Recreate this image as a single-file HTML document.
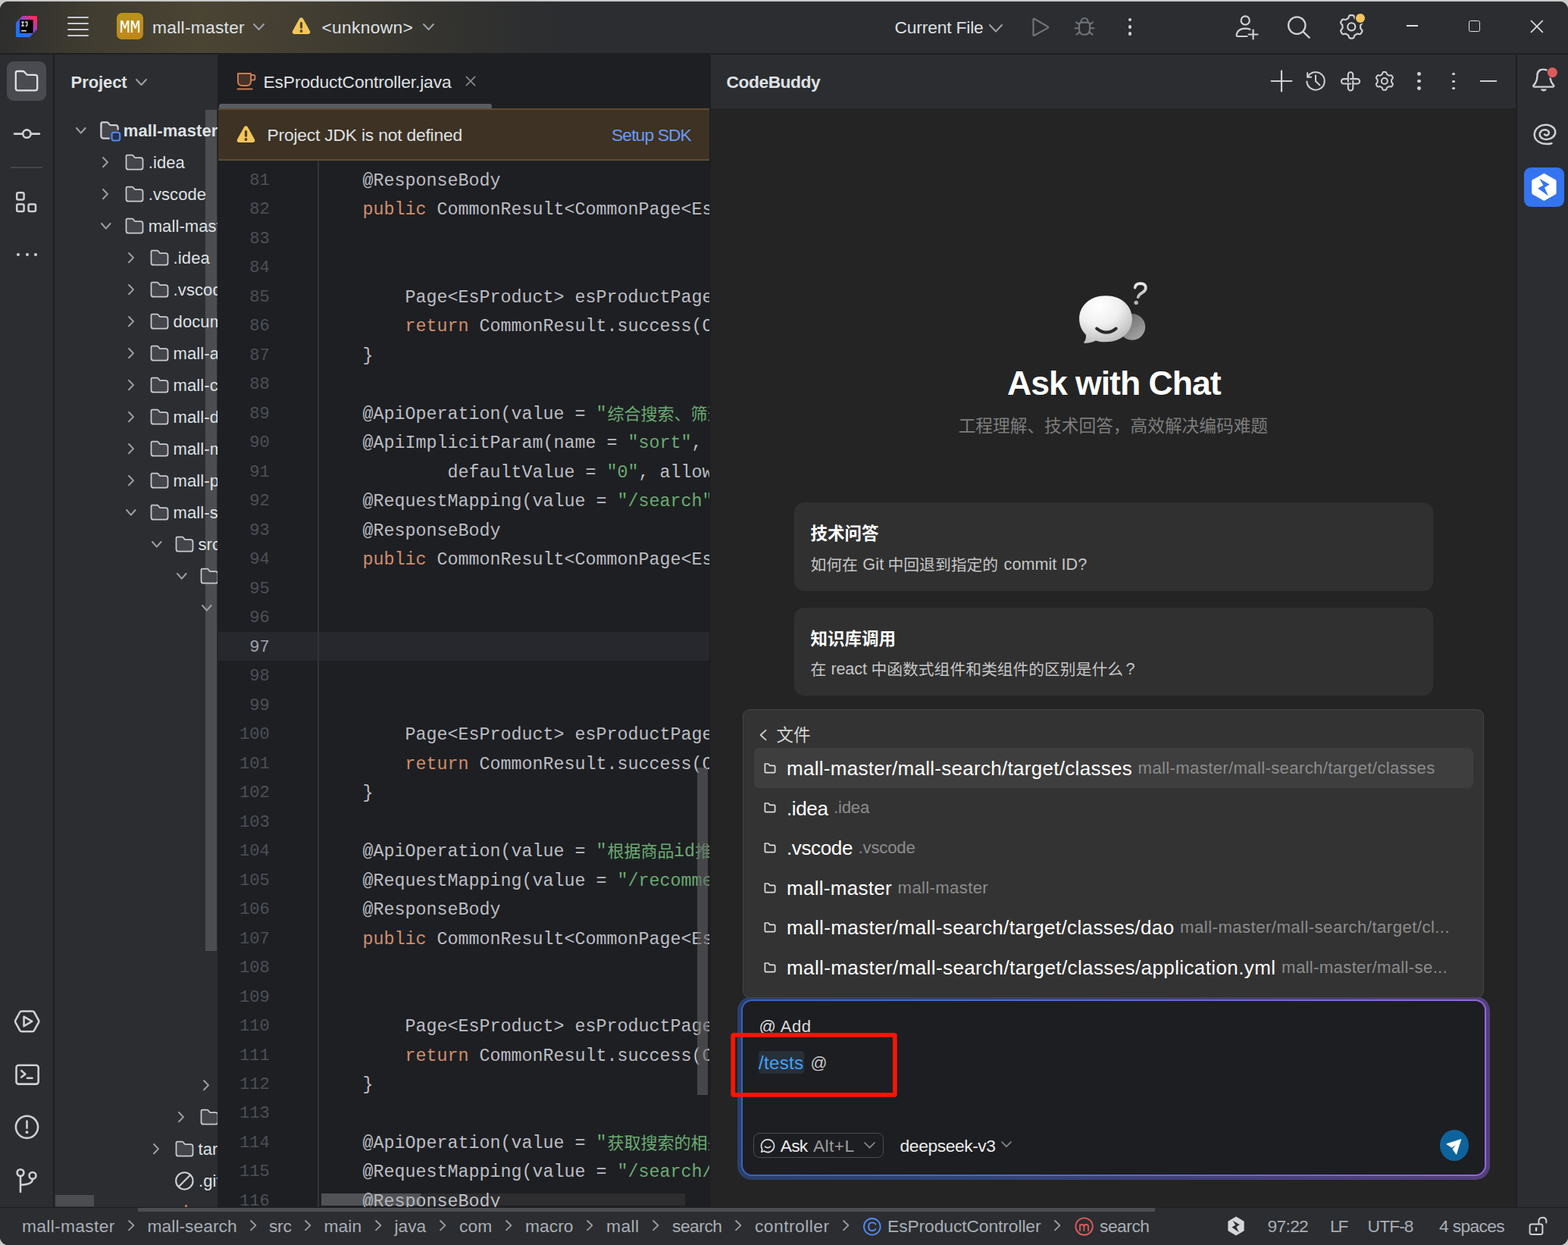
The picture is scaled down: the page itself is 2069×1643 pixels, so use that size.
<!DOCTYPE html>
<html lang="en"><head><meta charset="utf-8"><title>mall-master - EsProductController.java</title>
<style>
html,body{margin:0;padding:0;}
body{width:2069px;height:1643px;overflow:hidden;position:relative;background:#c9c9c9;font-family:"Liberation Sans",sans-serif;}
div,span,svg{position:absolute;}
span{white-space:pre;display:block;}
.clip{overflow:hidden;}
i{font-style:normal;}
</style></head><body>

<div id="root" style="left:0;top:0;width:2069px;height:1643px;background:#2b2d30;clip-path:inset(2px 0 0 0 round 11px);">
<div style="left:0px;top:72px;width:70.2px;height:1521px;background:#2b2d30;"></div>
<div style="left:70.2px;top:72px;width:1.8px;height:1521px;background:#1e1f22;"></div>
<div style="left:9px;top:81px;width:52px;height:52px;background:#4a4b50;border-radius:9px;"></div>
<svg style="left:18px;top:91px;" width="34" height="32" viewBox="0 0 34 32"><path d="M5 3 H12.2 Q13.2 3 14 3.8 L17.2 7.2 Q17.9 7.9 19 7.9 H28.4 Q31.2 7.9 31.2 10.7 V25.6 Q31.2 28.4 28.4 28.4 H5.6 Q2.8 28.4 2.8 25.6 V5.2 Q2.8 3 5 3Z" fill="none" stroke="#dfe1e5" stroke-width="2.3" stroke-linejoin="round"/></svg>
<svg style="left:16px;top:166px;" width="40" height="22" viewBox="0 0 40 22"><g fill="none" stroke="#ced0d6" stroke-width="2.6" stroke-linecap="round"><circle cx="19.4" cy="10.6" r="5.2"/><path d="M3 10.6H14M24.8 10.6H36"/></g></svg>
<div style="left:14px;top:220.3px;width:42px;height:1.5px;background:#43454a;"></div>
<svg style="left:19px;top:251px;" width="32" height="32" viewBox="0 0 32 32"><g fill="none" stroke="#ced0d6" stroke-width="2.5"><rect x="3.2" y="3.2" width="9.4" height="9.4" rx="2"/><rect x="3.2" y="18.6" width="9.4" height="9.4" rx="2"/><rect x="18.6" y="18.6" width="9.4" height="9.4" rx="2"/></g></svg>
<div style="left:22.2px;top:334.2px;width:4.2px;height:4.2px;background:#ced0d6;border-radius:50%;"></div>
<div style="left:33.5px;top:334.2px;width:4.2px;height:4.2px;background:#ced0d6;border-radius:50%;"></div>
<div style="left:44.8px;top:334.2px;width:4.2px;height:4.2px;background:#ced0d6;border-radius:50%;"></div>
<svg style="left:16.9px;top:1330.8px;" width="38.3" height="34.5" viewBox="0 0 40 36"><g fill="none" stroke="#ced0d6" stroke-width="2.7" stroke-linejoin="round"><path d="M12.2 3.6 H26.8 Q28.6 3.6 29.5 5.2 L35.4 16 Q36.2 17.6 35.4 19.2 L29.5 30 Q28.6 31.6 26.8 31.6 H12.2 Q10.4 31.6 9.5 30 L3.6 19.2 Q2.8 17.6 3.6 16 L9.5 5.2 Q10.4 3.6 12.2 3.6Z"/><path d="M15.2 11 V24.2 L26.4 17.6Z"/></g></svg>
<svg style="left:18.7px;top:1402.7px;" width="34.6" height="30.7" viewBox="0 0 36 32"><g fill="none" stroke="#ced0d6" stroke-width="2.7" stroke-linecap="round" stroke-linejoin="round"><rect x="2.6" y="2.8" width="30.4" height="26" rx="3.2"/><path d="M9.6 10.4 L15 15 L9.6 19.4M17.6 20.6 H24.6"/></g></svg>
<svg style="left:18px;top:1470px;" width="36" height="36" viewBox="0 0 36 36"><g fill="none" stroke="#ced0d6" stroke-width="2.6" stroke-linecap="round"><circle cx="17.5" cy="17.3" r="14.6"/><path d="M17.5 9.6 V18.6"/></g><circle cx="17.5" cy="24.2" r="1.9" fill="#ced0d6"/></svg>
<svg style="left:18px;top:1540px;" width="34" height="36" viewBox="0 0 34 36"><g fill="none" stroke="#ced0d6" stroke-width="2.6" stroke-linecap="round"><circle cx="9" cy="7.6" r="4.4"/><circle cx="25" cy="11.4" r="4.4"/><path d="M9 12 V33 M25 15.8 Q25 23.6 9 23.6"/></g></svg>
<div style="left:72px;top:72px;width:216px;height:1521px;background:#2b2d30;"></div>
<span style="left:93.6px;top:93.8px;font-size:22px;line-height:29px;color:#dfe1e5;font-weight:700;letter-spacing:-0.08px;">Project</span>
<svg style="left:178.3px;top:103.1px;" width="17" height="11" viewBox="0 0 17 11"><path d="M2 2 L8.5 9 L15 2" fill="none" stroke="#9da0a8" stroke-width="2" stroke-linecap="round" stroke-linejoin="round"/></svg>
<div style="left:271px;top:145px;width:14.5px;height:1110px;background:#4c4d51;"></div>
<div style="left:73px;top:1577px;width:51px;height:14.5px;background:#4c4d51;"></div>
<div class="clip" style="left:73px;top:144px;width:214.6px;height:1449px;">
<svg style="left:26.2px;top:23.00000000000001px;" width="15.6" height="10.6" viewBox="0 0 15.6 10.6"><path d="M2 2 L7.8 8.6 L13.6 2" fill="none" stroke="#9da0a8" stroke-width="2" stroke-linecap="round" stroke-linejoin="round"/></svg>
<svg style="left:58.5px;top:16.400000000000006px;" width="30" height="30" viewBox="0 0 30 30"><path d="M3 1.5 H9.2 Q10.1 1.5 10.7 2.2 L12.6 4.6 Q13.2 5.2 14.1 5.2 H20.5 Q23.5 5.2 23.5 8.2 V12 M12 22.5 H4.5 Q1.5 22.5 1.5 19.5 V3 Q1.5 1.5 3 1.5Z" fill="#43454a" stroke="#ced0d6" stroke-width="2" stroke-linejoin="round"/><path d="M3 1.5 H9.2 Q10.1 1.5 10.7 2.2 L12.6 4.6 Q13.2 5.2 14.1 5.2 H20.5 Q23.5 5.2 23.5 8.2 V22.5 H4.5 Q1.5 22.5 1.5 19.5Z" fill="#43454a" stroke="none"/><path d="M12.5 22.5 H4.5 Q1.5 22.5 1.5 19.5 V3 Q1.5 1.5 3 1.5 H9.2 Q10.1 1.5 10.7 2.2 L12.6 4.6 Q13.2 5.2 14.1 5.2 H20.5 Q23.5 5.2 23.5 8.2 V11.5" fill="none" stroke="#ced0d6" stroke-width="2" stroke-linejoin="round"/><rect x="15.6" y="14.8" width="10.6" height="10.6" rx="2.6" fill="#25324d" stroke="#548af7" stroke-width="2"/></svg>
<span style="left:89.80000000000001px;top:14.4px;font-size:22px;line-height:30px;color:#dfe1e5;font-weight:700;letter-spacing:0.1px;">mall-master</span>
<svg style="left:61.400000000000006px;top:62.20000000000002px;" width="10" height="16.2" viewBox="0 0 10 16.2"><path d="M2 2 L8 8.1 L2 14.2" fill="none" stroke="#9da0a8" stroke-width="2" stroke-linecap="round" stroke-linejoin="round"/></svg>
<svg style="left:91.6px;top:59px;" width="28" height="24" viewBox="0 0 28 24"><path d="M3 1.5 H9.2 Q10.1 1.5 10.7 2.2 L12.6 4.6 Q13.2 5.2 14.1 5.2 H20.5 Q23.5 5.2 23.5 8.2 V17.7 Q23.5 20.7 20.5 20.7 H4.5 Q1.5 20.7 1.5 17.7 V3 Q1.5 1.5 3 1.5Z" fill="#43454a" stroke="#c9cbd1" stroke-width="1.75" stroke-linejoin="round"/></svg>
<span style="left:122.70000000000002px;top:56.4px;font-size:22px;line-height:30px;color:#dfe1e5;letter-spacing:0.1px;">.idea</span>
<svg style="left:61.400000000000006px;top:104.20000000000002px;" width="10" height="16.2" viewBox="0 0 10 16.2"><path d="M2 2 L8 8.1 L2 14.2" fill="none" stroke="#9da0a8" stroke-width="2" stroke-linecap="round" stroke-linejoin="round"/></svg>
<svg style="left:91.6px;top:101px;" width="28" height="24" viewBox="0 0 28 24"><path d="M3 1.5 H9.2 Q10.1 1.5 10.7 2.2 L12.6 4.6 Q13.2 5.2 14.1 5.2 H20.5 Q23.5 5.2 23.5 8.2 V17.7 Q23.5 20.7 20.5 20.7 H4.5 Q1.5 20.7 1.5 17.7 V3 Q1.5 1.5 3 1.5Z" fill="#43454a" stroke="#c9cbd1" stroke-width="1.75" stroke-linejoin="round"/></svg>
<span style="left:122.70000000000002px;top:98.4px;font-size:22px;line-height:30px;color:#dfe1e5;letter-spacing:0.1px;">.vscode</span>
<svg style="left:59.3px;top:149.0px;" width="15.6" height="10.6" viewBox="0 0 15.6 10.6"><path d="M2 2 L7.8 8.6 L13.6 2" fill="none" stroke="#9da0a8" stroke-width="2" stroke-linecap="round" stroke-linejoin="round"/></svg>
<svg style="left:91.6px;top:143px;" width="28" height="24" viewBox="0 0 28 24"><path d="M3 1.5 H9.2 Q10.1 1.5 10.7 2.2 L12.6 4.6 Q13.2 5.2 14.1 5.2 H20.5 Q23.5 5.2 23.5 8.2 V17.7 Q23.5 20.7 20.5 20.7 H4.5 Q1.5 20.7 1.5 17.7 V3 Q1.5 1.5 3 1.5Z" fill="#43454a" stroke="#c9cbd1" stroke-width="1.75" stroke-linejoin="round"/></svg>
<span style="left:122.70000000000002px;top:140.4px;font-size:22px;line-height:30px;color:#dfe1e5;letter-spacing:0.1px;">mall-master</span>
<svg style="left:94.60000000000002px;top:188.20000000000002px;" width="10" height="16.2" viewBox="0 0 10 16.2"><path d="M2 2 L8 8.1 L2 14.2" fill="none" stroke="#9da0a8" stroke-width="2" stroke-linecap="round" stroke-linejoin="round"/></svg>
<svg style="left:124.69999999999999px;top:185px;" width="28" height="24" viewBox="0 0 28 24"><path d="M3 1.5 H9.2 Q10.1 1.5 10.7 2.2 L12.6 4.6 Q13.2 5.2 14.1 5.2 H20.5 Q23.5 5.2 23.5 8.2 V17.7 Q23.5 20.7 20.5 20.7 H4.5 Q1.5 20.7 1.5 17.7 V3 Q1.5 1.5 3 1.5Z" fill="#43454a" stroke="#c9cbd1" stroke-width="1.75" stroke-linejoin="round"/></svg>
<span style="left:155.60000000000002px;top:182.4px;font-size:22px;line-height:30px;color:#dfe1e5;letter-spacing:0.1px;">.idea</span>
<svg style="left:94.60000000000002px;top:230.20000000000002px;" width="10" height="16.2" viewBox="0 0 10 16.2"><path d="M2 2 L8 8.1 L2 14.2" fill="none" stroke="#9da0a8" stroke-width="2" stroke-linecap="round" stroke-linejoin="round"/></svg>
<svg style="left:124.69999999999999px;top:227px;" width="28" height="24" viewBox="0 0 28 24"><path d="M3 1.5 H9.2 Q10.1 1.5 10.7 2.2 L12.6 4.6 Q13.2 5.2 14.1 5.2 H20.5 Q23.5 5.2 23.5 8.2 V17.7 Q23.5 20.7 20.5 20.7 H4.5 Q1.5 20.7 1.5 17.7 V3 Q1.5 1.5 3 1.5Z" fill="#43454a" stroke="#c9cbd1" stroke-width="1.75" stroke-linejoin="round"/></svg>
<span style="left:155.60000000000002px;top:224.4px;font-size:22px;line-height:30px;color:#dfe1e5;letter-spacing:0.1px;">.vscode</span>
<svg style="left:94.60000000000002px;top:272.2px;" width="10" height="16.2" viewBox="0 0 10 16.2"><path d="M2 2 L8 8.1 L2 14.2" fill="none" stroke="#9da0a8" stroke-width="2" stroke-linecap="round" stroke-linejoin="round"/></svg>
<svg style="left:124.69999999999999px;top:269px;" width="28" height="24" viewBox="0 0 28 24"><path d="M3 1.5 H9.2 Q10.1 1.5 10.7 2.2 L12.6 4.6 Q13.2 5.2 14.1 5.2 H20.5 Q23.5 5.2 23.5 8.2 V17.7 Q23.5 20.7 20.5 20.7 H4.5 Q1.5 20.7 1.5 17.7 V3 Q1.5 1.5 3 1.5Z" fill="#43454a" stroke="#c9cbd1" stroke-width="1.75" stroke-linejoin="round"/></svg>
<span style="left:155.60000000000002px;top:266.4px;font-size:22px;line-height:30px;color:#dfe1e5;letter-spacing:0.1px;">document</span>
<svg style="left:94.60000000000002px;top:314.2px;" width="10" height="16.2" viewBox="0 0 10 16.2"><path d="M2 2 L8 8.1 L2 14.2" fill="none" stroke="#9da0a8" stroke-width="2" stroke-linecap="round" stroke-linejoin="round"/></svg>
<svg style="left:124.69999999999999px;top:311px;" width="28" height="24" viewBox="0 0 28 24"><path d="M3 1.5 H9.2 Q10.1 1.5 10.7 2.2 L12.6 4.6 Q13.2 5.2 14.1 5.2 H20.5 Q23.5 5.2 23.5 8.2 V17.7 Q23.5 20.7 20.5 20.7 H4.5 Q1.5 20.7 1.5 17.7 V3 Q1.5 1.5 3 1.5Z" fill="#43454a" stroke="#c9cbd1" stroke-width="1.75" stroke-linejoin="round"/></svg>
<span style="left:155.60000000000002px;top:308.4px;font-size:22px;line-height:30px;color:#dfe1e5;letter-spacing:0.1px;">mall-admin</span>
<svg style="left:94.60000000000002px;top:356.2px;" width="10" height="16.2" viewBox="0 0 10 16.2"><path d="M2 2 L8 8.1 L2 14.2" fill="none" stroke="#9da0a8" stroke-width="2" stroke-linecap="round" stroke-linejoin="round"/></svg>
<svg style="left:124.69999999999999px;top:353px;" width="28" height="24" viewBox="0 0 28 24"><path d="M3 1.5 H9.2 Q10.1 1.5 10.7 2.2 L12.6 4.6 Q13.2 5.2 14.1 5.2 H20.5 Q23.5 5.2 23.5 8.2 V17.7 Q23.5 20.7 20.5 20.7 H4.5 Q1.5 20.7 1.5 17.7 V3 Q1.5 1.5 3 1.5Z" fill="#43454a" stroke="#c9cbd1" stroke-width="1.75" stroke-linejoin="round"/></svg>
<span style="left:155.60000000000002px;top:350.4px;font-size:22px;line-height:30px;color:#dfe1e5;letter-spacing:0.1px;">mall-common</span>
<svg style="left:94.60000000000002px;top:398.19999999999993px;" width="10" height="16.2" viewBox="0 0 10 16.2"><path d="M2 2 L8 8.1 L2 14.2" fill="none" stroke="#9da0a8" stroke-width="2" stroke-linecap="round" stroke-linejoin="round"/></svg>
<svg style="left:124.69999999999999px;top:395px;" width="28" height="24" viewBox="0 0 28 24"><path d="M3 1.5 H9.2 Q10.1 1.5 10.7 2.2 L12.6 4.6 Q13.2 5.2 14.1 5.2 H20.5 Q23.5 5.2 23.5 8.2 V17.7 Q23.5 20.7 20.5 20.7 H4.5 Q1.5 20.7 1.5 17.7 V3 Q1.5 1.5 3 1.5Z" fill="#43454a" stroke="#c9cbd1" stroke-width="1.75" stroke-linejoin="round"/></svg>
<span style="left:155.60000000000002px;top:392.4px;font-size:22px;line-height:30px;color:#dfe1e5;letter-spacing:0.1px;">mall-demo</span>
<svg style="left:94.60000000000002px;top:440.19999999999993px;" width="10" height="16.2" viewBox="0 0 10 16.2"><path d="M2 2 L8 8.1 L2 14.2" fill="none" stroke="#9da0a8" stroke-width="2" stroke-linecap="round" stroke-linejoin="round"/></svg>
<svg style="left:124.69999999999999px;top:437px;" width="28" height="24" viewBox="0 0 28 24"><path d="M3 1.5 H9.2 Q10.1 1.5 10.7 2.2 L12.6 4.6 Q13.2 5.2 14.1 5.2 H20.5 Q23.5 5.2 23.5 8.2 V17.7 Q23.5 20.7 20.5 20.7 H4.5 Q1.5 20.7 1.5 17.7 V3 Q1.5 1.5 3 1.5Z" fill="#43454a" stroke="#c9cbd1" stroke-width="1.75" stroke-linejoin="round"/></svg>
<span style="left:155.60000000000002px;top:434.4px;font-size:22px;line-height:30px;color:#dfe1e5;letter-spacing:0.1px;">mall-mbg</span>
<svg style="left:94.60000000000002px;top:482.19999999999993px;" width="10" height="16.2" viewBox="0 0 10 16.2"><path d="M2 2 L8 8.1 L2 14.2" fill="none" stroke="#9da0a8" stroke-width="2" stroke-linecap="round" stroke-linejoin="round"/></svg>
<svg style="left:124.69999999999999px;top:479px;" width="28" height="24" viewBox="0 0 28 24"><path d="M3 1.5 H9.2 Q10.1 1.5 10.7 2.2 L12.6 4.6 Q13.2 5.2 14.1 5.2 H20.5 Q23.5 5.2 23.5 8.2 V17.7 Q23.5 20.7 20.5 20.7 H4.5 Q1.5 20.7 1.5 17.7 V3 Q1.5 1.5 3 1.5Z" fill="#43454a" stroke="#c9cbd1" stroke-width="1.75" stroke-linejoin="round"/></svg>
<span style="left:155.60000000000002px;top:476.4px;font-size:22px;line-height:30px;color:#dfe1e5;letter-spacing:0.1px;">mall-portal</span>
<svg style="left:92.39999999999999px;top:527.0px;" width="15.6" height="10.6" viewBox="0 0 15.6 10.6"><path d="M2 2 L7.8 8.6 L13.6 2" fill="none" stroke="#9da0a8" stroke-width="2" stroke-linecap="round" stroke-linejoin="round"/></svg>
<svg style="left:124.69999999999999px;top:521px;" width="28" height="24" viewBox="0 0 28 24"><path d="M3 1.5 H9.2 Q10.1 1.5 10.7 2.2 L12.6 4.6 Q13.2 5.2 14.1 5.2 H20.5 Q23.5 5.2 23.5 8.2 V17.7 Q23.5 20.7 20.5 20.7 H4.5 Q1.5 20.7 1.5 17.7 V3 Q1.5 1.5 3 1.5Z" fill="#43454a" stroke="#c9cbd1" stroke-width="1.75" stroke-linejoin="round"/></svg>
<span style="left:155.60000000000002px;top:518.4px;font-size:22px;line-height:30px;color:#dfe1e5;letter-spacing:0.1px;">mall-search</span>
<svg style="left:125.50000000000001px;top:569.0px;" width="15.6" height="10.6" viewBox="0 0 15.6 10.6"><path d="M2 2 L7.8 8.6 L13.6 2" fill="none" stroke="#9da0a8" stroke-width="2" stroke-linecap="round" stroke-linejoin="round"/></svg>
<svg style="left:157.8px;top:563px;" width="28" height="24" viewBox="0 0 28 24"><path d="M3 1.5 H9.2 Q10.1 1.5 10.7 2.2 L12.6 4.6 Q13.2 5.2 14.1 5.2 H20.5 Q23.5 5.2 23.5 8.2 V17.7 Q23.5 20.7 20.5 20.7 H4.5 Q1.5 20.7 1.5 17.7 V3 Q1.5 1.5 3 1.5Z" fill="#43454a" stroke="#c9cbd1" stroke-width="1.75" stroke-linejoin="round"/></svg>
<span style="left:188.5px;top:560.4px;font-size:22px;line-height:30px;color:#dfe1e5;letter-spacing:0.1px;">src</span>
<svg style="left:158.6px;top:611.0px;" width="15.6" height="10.6" viewBox="0 0 15.6 10.6"><path d="M2 2 L7.8 8.6 L13.6 2" fill="none" stroke="#9da0a8" stroke-width="2" stroke-linecap="round" stroke-linejoin="round"/></svg>
<svg style="left:190.89999999999998px;top:605px;" width="28" height="24" viewBox="0 0 28 24"><path d="M3 1.5 H9.2 Q10.1 1.5 10.7 2.2 L12.6 4.6 Q13.2 5.2 14.1 5.2 H20.5 Q23.5 5.2 23.5 8.2 V17.7 Q23.5 20.7 20.5 20.7 H4.5 Q1.5 20.7 1.5 17.7 V3 Q1.5 1.5 3 1.5Z" fill="#43454a" stroke="#c9cbd1" stroke-width="1.75" stroke-linejoin="round"/></svg>
<span style="left:221.39999999999998px;top:602.4px;font-size:22px;line-height:30px;color:#dfe1e5;letter-spacing:0.1px;">main</span>
<svg style="left:191.7px;top:653.0px;" width="15.6" height="10.6" viewBox="0 0 15.6 10.6"><path d="M2 2 L7.8 8.6 L13.6 2" fill="none" stroke="#9da0a8" stroke-width="2" stroke-linecap="round" stroke-linejoin="round"/></svg>
<svg style="left:194.2px;top:1280.2px;" width="10" height="16.2" viewBox="0 0 10 16.2"><path d="M2 2 L8 8.1 L2 14.2" fill="none" stroke="#9da0a8" stroke-width="2" stroke-linecap="round" stroke-linejoin="round"/></svg>
<svg style="left:161.0px;top:1322.2px;" width="10" height="16.2" viewBox="0 0 10 16.2"><path d="M2 2 L8 8.1 L2 14.2" fill="none" stroke="#9da0a8" stroke-width="2" stroke-linecap="round" stroke-linejoin="round"/></svg>
<svg style="left:190.89999999999998px;top:1319px;" width="28" height="24" viewBox="0 0 28 24"><path d="M3 1.5 H9.2 Q10.1 1.5 10.7 2.2 L12.6 4.6 Q13.2 5.2 14.1 5.2 H20.5 Q23.5 5.2 23.5 8.2 V17.7 Q23.5 20.7 20.5 20.7 H4.5 Q1.5 20.7 1.5 17.7 V3 Q1.5 1.5 3 1.5Z" fill="#43454a" stroke="#c9cbd1" stroke-width="1.75" stroke-linejoin="round"/></svg>
<span style="left:221.39999999999998px;top:1316.4px;font-size:22px;line-height:30px;color:#dfe1e5;letter-spacing:0.1px;">test</span>
<svg style="left:127.80000000000001px;top:1364.2px;" width="10" height="16.2" viewBox="0 0 10 16.2"><path d="M2 2 L8 8.1 L2 14.2" fill="none" stroke="#9da0a8" stroke-width="2" stroke-linecap="round" stroke-linejoin="round"/></svg>
<svg style="left:157.8px;top:1361px;" width="28" height="24" viewBox="0 0 28 24"><path d="M3 1.5 H9.2 Q10.1 1.5 10.7 2.2 L12.6 4.6 Q13.2 5.2 14.1 5.2 H20.5 Q23.5 5.2 23.5 8.2 V17.7 Q23.5 20.7 20.5 20.7 H4.5 Q1.5 20.7 1.5 17.7 V3 Q1.5 1.5 3 1.5Z" fill="#43454a" stroke="#c9cbd1" stroke-width="1.75" stroke-linejoin="round"/></svg>
<span style="left:188.5px;top:1358.4px;font-size:22px;line-height:30px;color:#dfe1e5;letter-spacing:0.1px;">target</span>
<svg style="left:156.5px;top:1400.5px;" width="27" height="27" viewBox="0 0 27 27"><g fill="none" stroke="#ced0d6" stroke-width="2.1"><circle cx="13.4" cy="13.4" r="11.2"/><path d="M5.6 21.2 L21.2 5.6"/></g></svg>
<span style="left:189px;top:1400.4px;font-size:22px;line-height:30px;color:#dfe1e5;letter-spacing:0.1px;">.gitignore</span>
<div style="left:170.5px;top:1445.5px;width:3px;height:3.5px;background:#c77d55;border-radius:1px;"></div>
</div>
<div style="left:286.6px;top:72px;width:1.8px;height:1521px;background:#1e1f22;"></div>
<div style="left:288.4px;top:72px;width:647.6px;height:1521px;background:#1e1f22;"></div>
<svg style="left:311px;top:94px;" width="28" height="26" viewBox="0 0 28 26"><g fill="#4a3226" stroke="#c77d55" stroke-width="2" stroke-linejoin="round" stroke-linecap="round"><path d="M3 3 H20 V13.6 Q20 19 14.6 19 H8.4 Q3 19 3 13.6Z"/><path d="M20 5 H23.4 Q25.4 5 25.4 7 V9.4 Q25.4 11.6 23.2 11.6 H20" fill="none"/><path d="M2.6 23.4 H21.6" fill="none"/></g></svg>
<span style="left:347.5px;top:92.9px;font-size:22.8px;line-height:30px;color:#dfe1e5;letter-spacing:-0.12px;">EsProductController.java</span>
<svg style="left:613px;top:99px;" width="16" height="16" viewBox="0 0 16 16"><path d="M2.4 2.4 L13.6 13.6 M13.6 2.4 L2.4 13.6" stroke="#868a91" stroke-width="1.7" stroke-linecap="round"/></svg>
<div style="left:289px;top:137px;width:360px;height:6.6px;background:#5a5d63;border-radius:3.3px;"></div>
<div style="left:288.4px;top:143px;width:647.6px;height:69px;background:#3d3223;"></div>
<div style="left:288.4px;top:142.9px;width:647.6px;height:2.1px;background:#5e4b30;"></div>
<div style="left:288.4px;top:209.8px;width:647.6px;height:2.2px;background:#5e4b30;"></div>
<svg style="left:310.5px;top:163.5px;" width="27" height="26" viewBox="0 0 27 26"><path d="M13.5 2.2 Q15 2.2 15.8 3.6 L25 20 Q26.2 23.6 22.6 24 H4.4 Q0.8 23.6 2 20 L11.2 3.6 Q12 2.2 13.5 2.2Z" fill="#f2c55c"/><rect x="11.9" y="7.8" width="3.2" height="9" rx="1.6" fill="#4d3f22"/><circle cx="13.5" cy="20" r="1.9" fill="#4d3f22"/></svg>
<span style="left:352.5px;top:163.0px;font-size:22.8px;line-height:30px;color:#dfe1e5;letter-spacing:-0.19px;">Project </span>
<span style="left:428.3px;top:163.0px;font-size:22.8px;line-height:30px;color:#dfe1e5;letter-spacing:-0.19px;">JDK </span>
<span style="left:477.0px;top:163.0px;font-size:22.8px;line-height:30px;color:#dfe1e5;letter-spacing:-0.19px;">is </span>
<span style="left:499.2px;top:163.0px;font-size:22.8px;line-height:30px;color:#dfe1e5;letter-spacing:-0.19px;">not </span>
<span style="left:536.5px;top:163.0px;font-size:22.8px;line-height:30px;color:#dfe1e5;letter-spacing:-0.19px;">defined</span>
<span style="left:807px;top:163.0px;font-size:22.8px;line-height:30px;color:#6b9bfa;letter-spacing:-0.87px;">Setup SDK</span>
<div class="clip" style="left:288.4px;top:212px;width:647.6px;height:1381px;">
<div style="left:0px;top:621.6px;width:647.6px;height:38.6px;background:#26282e;"></div>
<div style="left:131.0px;top:0px;width:1.6px;height:1381px;background:#313438;"></div>
<span style="right:580.2px;top:7.8px;font:22.1px/38.5px 'Liberation Mono',monospace;color:#4b5059;">81</span>
<span style="left:134.2px;top:7.8px;font:23.33px/38.5px 'Liberation Mono',monospace;color:#bcbec4;">    @ResponseBody</span>
<span style="right:580.2px;top:46.2px;font:22.1px/38.5px 'Liberation Mono',monospace;color:#4b5059;">82</span>
<span style="left:134.2px;top:46.2px;font:23.33px/38.5px 'Liberation Mono',monospace;color:#cf8e6d;">    public</span>
<span style="left:274.2px;top:46.2px;font:23.33px/38.5px 'Liberation Mono',monospace;color:#bcbec4;"> CommonResult&lt;CommonPage&lt;EsProduct&gt;&gt; search(</span>
<span style="right:580.2px;top:84.7px;font:22.1px/38.5px 'Liberation Mono',monospace;color:#4b5059;">83</span>
<span style="right:580.2px;top:123.2px;font:22.1px/38.5px 'Liberation Mono',monospace;color:#4b5059;">84</span>
<span style="right:580.2px;top:161.7px;font:22.1px/38.5px 'Liberation Mono',monospace;color:#4b5059;">85</span>
<span style="left:134.2px;top:161.7px;font:23.33px/38.5px 'Liberation Mono',monospace;color:#bcbec4;">        Page&lt;EsProduct&gt; esProductPage = esProductService.search(</span>
<span style="right:580.2px;top:200.2px;font:22.1px/38.5px 'Liberation Mono',monospace;color:#4b5059;">86</span>
<span style="left:134.2px;top:200.2px;font:23.33px/38.5px 'Liberation Mono',monospace;color:#cf8e6d;">        return</span>
<span style="left:330.2px;top:200.2px;font:23.33px/38.5px 'Liberation Mono',monospace;color:#bcbec4;"> CommonResult.success(CommonPage.restPage(</span>
<span style="right:580.2px;top:238.7px;font:22.1px/38.5px 'Liberation Mono',monospace;color:#4b5059;">87</span>
<span style="left:134.2px;top:238.7px;font:23.33px/38.5px 'Liberation Mono',monospace;color:#bcbec4;">    }</span>
<span style="right:580.2px;top:277.2px;font:22.1px/38.5px 'Liberation Mono',monospace;color:#4b5059;">88</span>
<span style="right:580.2px;top:315.7px;font:22.1px/38.5px 'Liberation Mono',monospace;color:#4b5059;">89</span>
<span style="left:134.2px;top:315.7px;font:23.33px/38.5px 'Liberation Mono',monospace;color:#bcbec4;">    @ApiOperation(value = </span>
<span style="left:498.2px;top:315.7px;font:23.33px/38.5px 'Liberation Mono',monospace;color:#6aab73;">&quot;</span>
<svg style="left:508.2px;top:317.8px" width="162.7" height="33.3" viewBox="0 0 162.7 33.3"><text x="4.5" y="23.6" font-size="22" fill="#6aab73" font-family="'Liberation Mono','Noto Sans CJK SC',monospace">综合搜索、筛选</text></svg>
<span style="right:580.2px;top:354.2px;font:22.1px/38.5px 'Liberation Mono',monospace;color:#4b5059;">90</span>
<span style="left:134.2px;top:354.2px;font:23.33px/38.5px 'Liberation Mono',monospace;color:#bcbec4;">    @ApiImplicitParam(name = </span>
<span style="left:540.2px;top:354.2px;font:23.33px/38.5px 'Liberation Mono',monospace;color:#6aab73;">&quot;sort&quot;</span>
<span style="left:624.2px;top:354.2px;font:23.33px/38.5px 'Liberation Mono',monospace;color:#bcbec4;">, value = </span>
<span style="right:580.2px;top:392.7px;font:22.1px/38.5px 'Liberation Mono',monospace;color:#4b5059;">91</span>
<span style="left:134.2px;top:392.7px;font:23.33px/38.5px 'Liberation Mono',monospace;color:#bcbec4;">            defaultValue = </span>
<span style="left:512.2px;top:392.7px;font:23.33px/38.5px 'Liberation Mono',monospace;color:#6aab73;">&quot;0&quot;</span>
<span style="left:554.2px;top:392.7px;font:23.33px/38.5px 'Liberation Mono',monospace;color:#bcbec4;">, allowableValues = </span>
<span style="right:580.2px;top:431.1px;font:22.1px/38.5px 'Liberation Mono',monospace;color:#4b5059;">92</span>
<span style="left:134.2px;top:431.1px;font:23.33px/38.5px 'Liberation Mono',monospace;color:#bcbec4;">    @RequestMapping(value = </span>
<span style="left:526.2px;top:431.1px;font:23.33px/38.5px 'Liberation Mono',monospace;color:#6aab73;">&quot;/search&quot;</span>
<span style="left:652.2px;top:431.1px;font:23.33px/38.5px 'Liberation Mono',monospace;color:#bcbec4;">, method</span>
<span style="right:580.2px;top:469.6px;font:22.1px/38.5px 'Liberation Mono',monospace;color:#4b5059;">93</span>
<span style="left:134.2px;top:469.6px;font:23.33px/38.5px 'Liberation Mono',monospace;color:#bcbec4;">    @ResponseBody</span>
<span style="right:580.2px;top:508.1px;font:22.1px/38.5px 'Liberation Mono',monospace;color:#4b5059;">94</span>
<span style="left:134.2px;top:508.1px;font:23.33px/38.5px 'Liberation Mono',monospace;color:#cf8e6d;">    public</span>
<span style="left:274.2px;top:508.1px;font:23.33px/38.5px 'Liberation Mono',monospace;color:#bcbec4;"> CommonResult&lt;CommonPage&lt;EsProduct&gt;&gt; search(</span>
<span style="right:580.2px;top:546.6px;font:22.1px/38.5px 'Liberation Mono',monospace;color:#4b5059;">95</span>
<span style="right:580.2px;top:585.1px;font:22.1px/38.5px 'Liberation Mono',monospace;color:#4b5059;">96</span>
<span style="right:580.2px;top:623.6px;font:22.1px/38.5px 'Liberation Mono',monospace;color:#a1a3ab;">97</span>
<span style="right:580.2px;top:662.1px;font:22.1px/38.5px 'Liberation Mono',monospace;color:#4b5059;">98</span>
<span style="right:580.2px;top:700.6px;font:22.1px/38.5px 'Liberation Mono',monospace;color:#4b5059;">99</span>
<span style="right:580.2px;top:739.1px;font:22.1px/38.5px 'Liberation Mono',monospace;color:#4b5059;">100</span>
<span style="left:134.2px;top:739.1px;font:23.33px/38.5px 'Liberation Mono',monospace;color:#bcbec4;">        Page&lt;EsProduct&gt; esProductPage = esProductService.search(</span>
<span style="right:580.2px;top:777.6px;font:22.1px/38.5px 'Liberation Mono',monospace;color:#4b5059;">101</span>
<span style="left:134.2px;top:777.6px;font:23.33px/38.5px 'Liberation Mono',monospace;color:#cf8e6d;">        return</span>
<span style="left:330.2px;top:777.6px;font:23.33px/38.5px 'Liberation Mono',monospace;color:#bcbec4;"> CommonResult.success(CommonPage.restPage(</span>
<span style="right:580.2px;top:816.0px;font:22.1px/38.5px 'Liberation Mono',monospace;color:#4b5059;">102</span>
<span style="left:134.2px;top:816.0px;font:23.33px/38.5px 'Liberation Mono',monospace;color:#bcbec4;">    }</span>
<span style="right:580.2px;top:854.5px;font:22.1px/38.5px 'Liberation Mono',monospace;color:#4b5059;">103</span>
<span style="right:580.2px;top:893.0px;font:22.1px/38.5px 'Liberation Mono',monospace;color:#4b5059;">104</span>
<span style="left:134.2px;top:893.0px;font:23.33px/38.5px 'Liberation Mono',monospace;color:#bcbec4;">    @ApiOperation(value = </span>
<span style="left:498.2px;top:893.0px;font:23.33px/38.5px 'Liberation Mono',monospace;color:#6aab73;">&quot;</span>
<svg style="left:508.2px;top:895.2px" width="96.4" height="33.3" viewBox="0 0 96.4 33.3"><text x="4.5" y="23.6" font-size="22" fill="#6aab73" font-family="'Liberation Mono','Noto Sans CJK SC',monospace">根据商品</text></svg>
<span style="left:600.6px;top:893.0px;font:23.33px/38.5px 'Liberation Mono',monospace;color:#6aab73;">id</span>
<svg style="left:624.6px;top:895.2px" width="52.2" height="33.3" viewBox="0 0 52.2 33.3"><text x="4.5" y="23.6" font-size="22" fill="#6aab73" font-family="'Liberation Mono','Noto Sans CJK SC',monospace">推荐</text></svg>
<span style="right:580.2px;top:931.5px;font:22.1px/38.5px 'Liberation Mono',monospace;color:#4b5059;">105</span>
<span style="left:134.2px;top:931.5px;font:23.33px/38.5px 'Liberation Mono',monospace;color:#bcbec4;">    @RequestMapping(value = </span>
<span style="left:526.2px;top:931.5px;font:23.33px/38.5px 'Liberation Mono',monospace;color:#6aab73;">&quot;/recommend/{id}&quot;</span>
<span style="left:764.2px;top:931.5px;font:23.33px/38.5px 'Liberation Mono',monospace;color:#bcbec4;">, </span>
<span style="right:580.2px;top:970.0px;font:22.1px/38.5px 'Liberation Mono',monospace;color:#4b5059;">106</span>
<span style="left:134.2px;top:970.0px;font:23.33px/38.5px 'Liberation Mono',monospace;color:#bcbec4;">    @ResponseBody</span>
<span style="right:580.2px;top:1008.5px;font:22.1px/38.5px 'Liberation Mono',monospace;color:#4b5059;">107</span>
<span style="left:134.2px;top:1008.5px;font:23.33px/38.5px 'Liberation Mono',monospace;color:#cf8e6d;">    public</span>
<span style="left:274.2px;top:1008.5px;font:23.33px/38.5px 'Liberation Mono',monospace;color:#bcbec4;"> CommonResult&lt;CommonPage&lt;EsProduct&gt;&gt; recommend(</span>
<span style="right:580.2px;top:1047.0px;font:22.1px/38.5px 'Liberation Mono',monospace;color:#4b5059;">108</span>
<span style="right:580.2px;top:1085.5px;font:22.1px/38.5px 'Liberation Mono',monospace;color:#4b5059;">109</span>
<span style="right:580.2px;top:1124.0px;font:22.1px/38.5px 'Liberation Mono',monospace;color:#4b5059;">110</span>
<span style="left:134.2px;top:1124.0px;font:23.33px/38.5px 'Liberation Mono',monospace;color:#bcbec4;">        Page&lt;EsProduct&gt; esProductPage = esProductService.recommend(</span>
<span style="right:580.2px;top:1162.5px;font:22.1px/38.5px 'Liberation Mono',monospace;color:#4b5059;">111</span>
<span style="left:134.2px;top:1162.5px;font:23.33px/38.5px 'Liberation Mono',monospace;color:#cf8e6d;">        return</span>
<span style="left:330.2px;top:1162.5px;font:23.33px/38.5px 'Liberation Mono',monospace;color:#bcbec4;"> CommonResult.success(CommonPage.restPage(</span>
<span style="right:580.2px;top:1200.9px;font:22.1px/38.5px 'Liberation Mono',monospace;color:#4b5059;">112</span>
<span style="left:134.2px;top:1200.9px;font:23.33px/38.5px 'Liberation Mono',monospace;color:#bcbec4;">    }</span>
<span style="right:580.2px;top:1239.4px;font:22.1px/38.5px 'Liberation Mono',monospace;color:#4b5059;">113</span>
<span style="right:580.2px;top:1277.9px;font:22.1px/38.5px 'Liberation Mono',monospace;color:#4b5059;">114</span>
<span style="left:134.2px;top:1277.9px;font:23.33px/38.5px 'Liberation Mono',monospace;color:#bcbec4;">    @ApiOperation(value = </span>
<span style="left:498.2px;top:1277.9px;font:23.33px/38.5px 'Liberation Mono',monospace;color:#6aab73;">&quot;</span>
<svg style="left:508.2px;top:1280.1px" width="162.7" height="33.3" viewBox="0 0 162.7 33.3"><text x="4.5" y="23.6" font-size="22" fill="#6aab73" font-family="'Liberation Mono','Noto Sans CJK SC',monospace">获取搜索的相关</text></svg>
<span style="right:580.2px;top:1316.4px;font:22.1px/38.5px 'Liberation Mono',monospace;color:#4b5059;">115</span>
<span style="left:134.2px;top:1316.4px;font:23.33px/38.5px 'Liberation Mono',monospace;color:#bcbec4;">    @RequestMapping(value = </span>
<span style="left:526.2px;top:1316.4px;font:23.33px/38.5px 'Liberation Mono',monospace;color:#6aab73;">&quot;/search/relate&quot;</span>
<span style="left:750.2px;top:1316.4px;font:23.33px/38.5px 'Liberation Mono',monospace;color:#bcbec4;">, method</span>
<span style="right:580.2px;top:1354.9px;font:22.1px/38.5px 'Liberation Mono',monospace;color:#4b5059;">116</span>
<span style="left:134.2px;top:1354.9px;font:23.33px/38.5px 'Liberation Mono',monospace;color:#bcbec4;">    @ResponseBody</span>
<div style="left:136.10000000000002px;top:1363.4px;width:480px;height:16px;background:rgba(255,255,255,0.065);"></div>
<div style="left:136.10000000000002px;top:1363.4px;width:131px;height:16px;background:rgba(160,162,168,0.32);"></div>
<div style="left:631.8000000000001px;top:801px;width:13.8px;height:432px;background:rgba(96,96,98,0.6);"></div>
</div>
<div style="left:936px;top:72px;width:2.2px;height:1521px;background:#1e1f22;"></div>
<div style="left:938.2px;top:72px;width:1062.2px;height:71.4px;background:#2b2d30;"></div>
<div style="left:938.2px;top:143.4px;width:1062.2px;height:1449.6px;background:#242424;"></div>
<span style="left:958.6px;top:92.7px;font-size:22.8px;line-height:30px;color:#dfe1e5;font-weight:700;letter-spacing:-0.49px;">CodeBuddy</span>
<svg style="left:1675px;top:91px;" width="32" height="32" viewBox="0 0 32 32"><path d="M16 2.6 V29.4 M2.6 16 H29.4" stroke="#ced0d6" stroke-width="2.2" stroke-linecap="round"/></svg>
<svg style="left:1720px;top:92px;" width="32" height="30" viewBox="0 0 32 30"><g fill="none" stroke="#ced0d6" stroke-width="2.05" stroke-linecap="round" stroke-linejoin="round"><path d="M5.6 9.7 A11.7 11.7 0 1 1 4.4 15.6"/><path d="M5.2 4.2 V9.7 H10.2"/><path d="M16 7.6 V15 L21.4 20.4"/></g></svg>
<svg style="left:1767px;top:92px;" width="30" height="30" viewBox="0 0 30 30"><g transform="translate(15.05 15.3)" fill="none" stroke="#ced0d6" stroke-width="2.05" stroke-linecap="round"><path d="M-3.2 0.3 V-8.9 A3.2 3.2 0 0 1 3.2 -8.9 V-4.1" transform="rotate(0)"/><path d="M-3.2 0.3 V-8.9 A3.2 3.2 0 0 1 3.2 -8.9 V-4.1" transform="rotate(90)"/><path d="M-3.2 0.3 V-8.9 A3.2 3.2 0 0 1 3.2 -8.9 V-4.1" transform="rotate(180)"/><path d="M-3.2 0.3 V-8.9 A3.2 3.2 0 0 1 3.2 -8.9 V-4.1" transform="rotate(270)"/></g></svg>
<svg style="left:1812.0px;top:92.2px" width="29.8" height="29.8" viewBox="1812.0 92.2 29.8 29.8"><path d="M1826.90 95.20 L1827.68 95.23 L1828.45 95.30 L1829.15 95.79 L1829.63 96.90 L1829.98 98.02 L1830.43 98.58 L1830.98 98.83 L1831.51 99.11 L1832.02 99.43 L1832.51 99.78 L1833.22 99.89 L1834.37 99.63 L1835.57 99.49 L1836.34 99.86 L1836.79 100.49 L1837.21 101.15 L1837.57 101.84 L1837.89 102.55 L1837.82 103.39 L1837.10 104.37 L1836.30 105.23 L1836.04 105.90 L1836.10 106.50 L1836.12 107.10 L1836.10 107.70 L1836.04 108.30 L1836.30 108.97 L1837.10 109.83 L1837.82 110.81 L1837.89 111.65 L1837.57 112.36 L1837.21 113.05 L1836.79 113.71 L1836.34 114.34 L1835.57 114.71 L1834.37 114.57 L1833.22 114.31 L1832.51 114.42 L1832.02 114.77 L1831.51 115.09 L1830.98 115.37 L1830.43 115.62 L1829.98 116.18 L1829.63 117.30 L1829.15 118.41 L1828.45 118.90 L1827.68 118.97 L1826.90 119.00 L1826.12 118.97 L1825.35 118.90 L1824.65 118.41 L1824.17 117.30 L1823.82 116.18 L1823.37 115.62 L1822.82 115.37 L1822.29 115.09 L1821.78 114.77 L1821.29 114.42 L1820.58 114.31 L1819.43 114.57 L1818.23 114.71 L1817.46 114.34 L1817.01 113.71 L1816.59 113.05 L1816.23 112.36 L1815.91 111.65 L1815.98 110.81 L1816.70 109.83 L1817.50 108.97 L1817.76 108.30 L1817.70 107.70 L1817.68 107.10 L1817.70 106.50 L1817.76 105.90 L1817.50 105.23 L1816.70 104.37 L1815.98 103.39 L1815.91 102.55 L1816.23 101.84 L1816.59 101.15 L1817.01 100.49 L1817.46 99.86 L1818.23 99.49 L1819.43 99.63 L1820.58 99.89 L1821.29 99.78 L1821.78 99.43 L1822.29 99.11 L1822.82 98.83 L1823.37 98.58 L1823.82 98.02 L1824.17 96.90 L1824.65 95.79 L1825.35 95.30 L1826.12 95.23Z" fill="none" stroke="#ced0d6" stroke-width="2.0" stroke-linejoin="round"/><circle cx="1826.9" cy="107.1" r="3.93" fill="none" stroke="#ced0d6" stroke-width="2.0"/></svg>
<div style="left:1870.3999999999999px;top:95.19999999999999px;width:4.8px;height:4.8px;background:#ced0d6;border-radius:50%;"></div>
<div style="left:1916.3px;top:96.1px;width:3.4px;height:3.4px;background:#ced0d6;border-radius:50%;"></div>
<div style="left:1870.3999999999999px;top:104.69999999999999px;width:4.8px;height:4.8px;background:#ced0d6;border-radius:50%;"></div>
<div style="left:1916.3px;top:105.6px;width:3.4px;height:3.4px;background:#ced0d6;border-radius:50%;"></div>
<div style="left:1870.3999999999999px;top:114.1px;width:4.8px;height:4.8px;background:#ced0d6;border-radius:50%;"></div>
<div style="left:1916.3px;top:115.0px;width:3.4px;height:3.4px;background:#ced0d6;border-radius:50%;"></div>
<div style="left:1952.6px;top:106.2px;width:22.8px;height:1.8px;background:#ced0d6;"></div>
<svg style="left:1415px;top:365px;" width="108" height="96" viewBox="1415 365 108 96"><defs><radialGradient id="bb" cx="0.36" cy="0.22" r="0.95"><stop offset="0" stop-color="#ffffff"/><stop offset="0.42" stop-color="#f0f0f0"/><stop offset="0.78" stop-color="#c4c4c4"/><stop offset="1" stop-color="#a4a4a4"/></radialGradient><linearGradient id="bg2" x1="0.1" y1="0.1" x2="0.8" y2="1"><stop offset="0" stop-color="#666666"/><stop offset="1" stop-color="#a8a8a8"/></linearGradient><linearGradient id="qg" x1="0" y1="0" x2="0" y2="1"><stop offset="0" stop-color="#ececec"/><stop offset="1" stop-color="#b8b8b8"/></linearGradient></defs>
<circle cx="1493.9" cy="431.4" r="17.3" fill="url(#bg2)"/>
<path d="M1459 390.2 C1479.5 390.2 1493.9 403.4 1493.9 420.8 C1493.9 438.2 1479.5 451.3 1459 451.3 C1454 451.3 1449.6 450.6 1445.8 449.4 C1441.6 451.6 1436.4 452.7 1431 452.9 C1430.2 452.9 1430 452.2 1430.5 451.6 C1432.6 448.6 1433.4 445.4 1432.8 441.6 C1427.2 436.2 1424.1 429.2 1424.1 420.8 C1424.1 403.4 1438.5 390.2 1459 390.2Z" fill="url(#bb)"/>
<path d="M1447.2 433.6 Q1459.9 443.6 1472.6 433.6" fill="none" stroke="#2a2a2a" stroke-width="4.1" stroke-linecap="round"/>
<path d="M1497.6 379.6 Q1498.4 374.2 1504.8 374.2 Q1511.6 374.4 1511.8 380 Q1511.8 383.6 1507.4 386.2 Q1502.6 389 1501.6 392.2" fill="none" stroke="url(#qg)" stroke-width="3.7" stroke-linecap="round" stroke-linejoin="round"/>
<circle cx="1499.2" cy="399.4" r="2.7" fill="#b4b4b4"/></svg>
<span style="left:1329.0px;top:476.5px;font-size:44.6px;line-height:58px;color:#ffffff;font-weight:700;letter-spacing:-1.03px;">Ask </span>
<span style="left:1419.1px;top:476.5px;font-size:44.6px;line-height:58px;color:#ffffff;font-weight:700;letter-spacing:-1.03px;">with </span>
<span style="left:1515.5px;top:476.5px;font-size:44.6px;line-height:58px;color:#ffffff;font-weight:700;letter-spacing:-1.03px;">Chat</span>
<svg style="left:1260.0px;top:545.7px" width="418.0" height="33.5" viewBox="0 0 418.0 33.5"><text x="4.7" y="24" font-size="22.7" fill="#7d7d7d" font-family="'Liberation Sans','Noto Sans CJK SC',sans-serif">工程理解、技术回答，高效解决编码难题</text></svg>
<div style="left:1048px;top:663.4px;width:843px;height:116.8px;background:#303030;border-radius:13px;"></div>
<svg style="left:1064.5px;top:688.4px" width="99.0" height="33.5" viewBox="0 0 99.0 33.5"><text x="4.5" y="24" font-size="22.5" font-weight="700" fill="#ffffff" font-family="'Liberation Sans','Noto Sans CJK SC',sans-serif">技术问答</text></svg>
<svg style="left:1064.5px;top:730.5px" width="71.0" height="31.5" viewBox="0 0 71.0 31.5"><text x="4.5" y="22.4" font-size="20.8" fill="#c6c6c6" font-family="'Liberation Sans','Noto Sans CJK SC',sans-serif">如何在</text></svg>
<span style="left:1138.2px;top:731.1px;font-size:21.6px;line-height:28px;color:#c6c6c6;letter-spacing:0.27px;">Git</span>
<svg style="left:1167.3px;top:730.5px" width="155.0" height="31.5" viewBox="0 0 155.0 31.5"><text x="4.5" y="22.4" font-size="20.8" fill="#c6c6c6" font-family="'Liberation Sans','Noto Sans CJK SC',sans-serif">中回退到指定的</text></svg>
<span style="left:1324.6px;top:731.1px;font-size:21.6px;line-height:28px;color:#c6c6c6;letter-spacing:0.04px;">commit ID?</span>
<div style="left:1048px;top:801.6px;width:843px;height:116.8px;background:#303030;border-radius:13px;"></div>
<svg style="left:1064.5px;top:826.6px" width="121.8" height="33.5" viewBox="0 0 121.8 33.5"><text x="4.5" y="24" font-size="22.5" font-weight="700" fill="#ffffff" font-family="'Liberation Sans','Noto Sans CJK SC',sans-serif">知识库调用</text></svg>
<svg style="left:1064.5px;top:868.7px" width="29.0" height="31.5" viewBox="0 0 29.0 31.5"><text x="4.5" y="22.4" font-size="20.8" fill="#c6c6c6" font-family="'Liberation Sans','Noto Sans CJK SC',sans-serif">在</text></svg>
<span style="left:1096.4px;top:869.3px;font-size:21.6px;line-height:28px;color:#c6c6c6;letter-spacing:-0.12px;">react</span>
<svg style="left:1144.6px;top:868.7px" width="341.8" height="31.5" viewBox="0 0 341.8 31.5"><text x="4.5" y="22.4" font-size="20.8" fill="#c6c6c6" font-family="'Liberation Sans','Noto Sans CJK SC',sans-serif">中函数式组件和类组件的区别是什么</text></svg>
<span style="left:1485.6px;top:869.3px;font-size:21.6px;line-height:28px;color:#c6c6c6;">?</span>
<div style="left:973.1px;top:1315.1px;width:992.9px;height:241.8px;background:linear-gradient(90deg,#2a3f6c 0%,#2f4478 30%,#45407c 65%,#553f7e 100%);border-radius:19px;"></div>
<div style="left:977.9px;top:1319.2px;width:983.5px;height:232.9px;background:linear-gradient(90deg,#3763bd 0%,#3f6ccc 28%,#6a66d4 62%,#9069dc 100%);border-radius:14.6px;"></div>
<div style="left:980.3px;top:1321.3px;width:978.6px;height:228.4px;background:#1d1e22;border-radius:12.2px;"></div>
<div style="left:980px;top:936px;width:978px;height:381px;background:#333333;border-radius:9px;border:1.2px solid #454545;box-sizing:border-box;"></div>
<svg style="left:1000px;top:960px;" width="14" height="20" viewBox="0 0 14 20"><path d="M10.6 3.6 L3.6 10 L10.6 16.4" fill="none" stroke="#d0d0d0" stroke-width="1.8" stroke-linecap="round" stroke-linejoin="round"/></svg>
<svg style="left:1020.2px;top:954.4px" width="54.0" height="33.8" viewBox="0 0 54.0 33.8"><text x="4.5" y="24" font-size="22.5" fill="#d4d4d4" font-family="'Liberation Sans','Noto Sans CJK SC',sans-serif">文件</text></svg>
<div style="left:994.8px;top:987.2px;width:949.4px;height:52.4px;background:#3e3e3e;border-radius:7px;"></div>
<svg style="left:1007px;top:1004.6px;" width="18" height="18" viewBox="0 0 18 18"><path d="M2.4 3 H6.8 L8.8 5.4 H14.4 Q15.6 5.4 15.6 6.6 V13.4 Q15.6 14.6 14.4 14.6 H3.6 Q2.4 14.6 2.4 13.4Z" fill="none" stroke="#e0e0e0" stroke-width="1.7" stroke-linejoin="round"/></svg>
<span style="left:1038.0px;top:996.8px;font-size:26px;line-height:34px;color:#ffffff;letter-spacing:0.29px;">mall-</span>
<span style="left:1095.8px;top:996.8px;font-size:26px;line-height:34px;color:#ffffff;letter-spacing:0.29px;">master/</span>
<span style="left:1184.5px;top:996.8px;font-size:26px;line-height:34px;color:#ffffff;letter-spacing:0.29px;">mall-</span>
<span style="left:1242.3px;top:996.8px;font-size:26px;line-height:34px;color:#ffffff;letter-spacing:0.29px;">search/</span>
<span style="left:1329.5px;top:996.8px;font-size:26px;line-height:34px;color:#ffffff;letter-spacing:0.29px;">target/</span>
<span style="left:1405.3px;top:996.8px;font-size:26px;line-height:34px;color:#ffffff;letter-spacing:0.29px;">classes</span>
<span style="left:1501.6px;top:998.6px;font-size:22.2px;line-height:29px;color:#8c8c8c;letter-spacing:0.32px;">mall-</span>
<span style="left:1551.3px;top:998.6px;font-size:22.2px;line-height:29px;color:#8c8c8c;letter-spacing:0.32px;">master/</span>
<span style="left:1627.5px;top:998.6px;font-size:22.2px;line-height:29px;color:#8c8c8c;letter-spacing:0.32px;">mall-</span>
<span style="left:1677.2px;top:998.6px;font-size:22.2px;line-height:29px;color:#8c8c8c;letter-spacing:0.32px;">search/</span>
<span style="left:1752.2px;top:998.6px;font-size:22.2px;line-height:29px;color:#8c8c8c;letter-spacing:0.32px;">target/</span>
<span style="left:1817.4px;top:998.6px;font-size:22.2px;line-height:29px;color:#8c8c8c;letter-spacing:0.32px;">classes</span>
<svg style="left:1007px;top:1057.26px;" width="18" height="18" viewBox="0 0 18 18"><path d="M2.4 3 H6.8 L8.8 5.4 H14.4 Q15.6 5.4 15.6 6.6 V13.4 Q15.6 14.6 14.4 14.6 H3.6 Q2.4 14.6 2.4 13.4Z" fill="none" stroke="#e0e0e0" stroke-width="1.7" stroke-linejoin="round"/></svg>
<span style="left:1038px;top:1049.5px;font-size:26px;line-height:34px;color:#ffffff;letter-spacing:-0.38px;">.idea</span>
<span style="left:1100.1px;top:1051.3px;font-size:22.2px;line-height:29px;color:#8c8c8c;letter-spacing:-0.23px;">.idea</span>
<svg style="left:1007px;top:1109.92px;" width="18" height="18" viewBox="0 0 18 18"><path d="M2.4 3 H6.8 L8.8 5.4 H14.4 Q15.6 5.4 15.6 6.6 V13.4 Q15.6 14.6 14.4 14.6 H3.6 Q2.4 14.6 2.4 13.4Z" fill="none" stroke="#e0e0e0" stroke-width="1.7" stroke-linejoin="round"/></svg>
<span style="left:1038px;top:1102.1px;font-size:26px;line-height:34px;color:#ffffff;letter-spacing:-0.37px;">.vscode</span>
<span style="left:1132.6px;top:1103.9px;font-size:22.2px;line-height:29px;color:#8c8c8c;letter-spacing:-0.22px;">.vscode</span>
<svg style="left:1007px;top:1162.58px;" width="18" height="18" viewBox="0 0 18 18"><path d="M2.4 3 H6.8 L8.8 5.4 H14.4 Q15.6 5.4 15.6 6.6 V13.4 Q15.6 14.6 14.4 14.6 H3.6 Q2.4 14.6 2.4 13.4Z" fill="none" stroke="#e0e0e0" stroke-width="1.7" stroke-linejoin="round"/></svg>
<span style="left:1038.0px;top:1154.8px;font-size:26px;line-height:34px;color:#ffffff;letter-spacing:0.29px;">mall-</span>
<span style="left:1095.8px;top:1154.8px;font-size:26px;line-height:34px;color:#ffffff;letter-spacing:0.29px;">master</span>
<span style="left:1184.6px;top:1156.6px;font-size:22.2px;line-height:29px;color:#8c8c8c;letter-spacing:0.32px;">mall-</span>
<span style="left:1234.3px;top:1156.6px;font-size:22.2px;line-height:29px;color:#8c8c8c;letter-spacing:0.32px;">master</span>
<svg style="left:1007px;top:1215.24px;" width="18" height="18" viewBox="0 0 18 18"><path d="M2.4 3 H6.8 L8.8 5.4 H14.4 Q15.6 5.4 15.6 6.6 V13.4 Q15.6 14.6 14.4 14.6 H3.6 Q2.4 14.6 2.4 13.4Z" fill="none" stroke="#e0e0e0" stroke-width="1.7" stroke-linejoin="round"/></svg>
<span style="left:1038.0px;top:1207.4px;font-size:26px;line-height:34px;color:#ffffff;letter-spacing:0.38px;">mall-</span>
<span style="left:1096.2px;top:1207.4px;font-size:26px;line-height:34px;color:#ffffff;letter-spacing:0.38px;">master/</span>
<span style="left:1185.6px;top:1207.4px;font-size:26px;line-height:34px;color:#ffffff;letter-spacing:0.38px;">mall-</span>
<span style="left:1243.8px;top:1207.4px;font-size:26px;line-height:34px;color:#ffffff;letter-spacing:0.38px;">search/</span>
<span style="left:1331.7px;top:1207.4px;font-size:26px;line-height:34px;color:#ffffff;letter-spacing:0.38px;">target/</span>
<span style="left:1408.0px;top:1207.4px;font-size:26px;line-height:34px;color:#ffffff;letter-spacing:0.38px;">classes/</span>
<span style="left:1505.0px;top:1207.4px;font-size:26px;line-height:34px;color:#ffffff;letter-spacing:0.38px;">dao</span>
<span style="left:1557.1px;top:1209.2px;font-size:22.2px;line-height:29px;color:#8c8c8c;letter-spacing:0.43px;">mall-</span>
<span style="left:1607.4px;top:1209.2px;font-size:22.2px;line-height:29px;color:#8c8c8c;letter-spacing:0.43px;">master/</span>
<span style="left:1684.4px;top:1209.2px;font-size:22.2px;line-height:29px;color:#8c8c8c;letter-spacing:0.43px;">mall-</span>
<span style="left:1734.6px;top:1209.2px;font-size:22.2px;line-height:29px;color:#8c8c8c;letter-spacing:0.43px;">search/</span>
<span style="left:1810.5px;top:1209.2px;font-size:22.2px;line-height:29px;color:#8c8c8c;letter-spacing:0.43px;">target/</span>
<span style="left:1876.4px;top:1209.2px;font-size:22.2px;line-height:29px;color:#8c8c8c;letter-spacing:0.43px;">cl...</span>
<svg style="left:1007px;top:1267.9px;" width="18" height="18" viewBox="0 0 18 18"><path d="M2.4 3 H6.8 L8.8 5.4 H14.4 Q15.6 5.4 15.6 6.6 V13.4 Q15.6 14.6 14.4 14.6 H3.6 Q2.4 14.6 2.4 13.4Z" fill="none" stroke="#e0e0e0" stroke-width="1.7" stroke-linejoin="round"/></svg>
<span style="left:1038.0px;top:1260.1px;font-size:26px;line-height:34px;color:#ffffff;letter-spacing:0.39px;">mall-</span>
<span style="left:1096.3px;top:1260.1px;font-size:26px;line-height:34px;color:#ffffff;letter-spacing:0.39px;">master/</span>
<span style="left:1185.7px;top:1260.1px;font-size:26px;line-height:34px;color:#ffffff;letter-spacing:0.39px;">mall-</span>
<span style="left:1244.0px;top:1260.1px;font-size:26px;line-height:34px;color:#ffffff;letter-spacing:0.39px;">search/</span>
<span style="left:1332.1px;top:1260.1px;font-size:26px;line-height:34px;color:#ffffff;letter-spacing:0.39px;">target/</span>
<span style="left:1408.5px;top:1260.1px;font-size:26px;line-height:34px;color:#ffffff;letter-spacing:0.39px;">classes/</span>
<span style="left:1505.6px;top:1260.1px;font-size:26px;line-height:34px;color:#ffffff;letter-spacing:0.39px;">application.yml</span>
<span style="left:1691.1px;top:1261.9px;font-size:22.2px;line-height:29px;color:#8c8c8c;letter-spacing:0.31px;">mall-</span>
<span style="left:1740.8px;top:1261.9px;font-size:22.2px;line-height:29px;color:#8c8c8c;letter-spacing:0.31px;">master/</span>
<span style="left:1816.9px;top:1261.9px;font-size:22.2px;line-height:29px;color:#8c8c8c;letter-spacing:0.31px;">mall-</span>
<span style="left:1866.6px;top:1261.9px;font-size:22.2px;line-height:29px;color:#8c8c8c;letter-spacing:0.31px;">se...</span>
<span style="left:1001.5px;top:1339.9px;font-size:22px;line-height:29px;color:#dcdcdc;letter-spacing:0.52px;">@ Add</span>
<div style="left:1001px;top:1387px;width:60px;height:29.8px;background:#272f39;border-radius:4px;"></div>
<span style="left:1001px;top:1387.4px;font-size:24.2px;line-height:31px;color:#40a3fc;letter-spacing:0.28px;">/tests</span>
<span style="left:1069.5px;top:1388.9px;font-size:21.6px;line-height:28px;color:#c8c8c8;">@</span>
<svg style="left:962px;top:1361px;" width="224" height="89" viewBox="0 0 224 89"><rect x="5.2" y="4.9" width="213.6" height="79" rx="1" fill="none" stroke="#fb1405" stroke-width="5.8"/></svg>
<div style="left:994.4px;top:1495.2px;width:171.4px;height:32.6px;background:transparent;border:1.3px solid #4d4d4d;border-radius:8px;box-sizing:border-box;"></div>
<svg style="left:1002px;top:1500.5px;" width="22" height="22" viewBox="0 0 22 22"><g fill="none" stroke="#e0e0e0" stroke-width="1.7" stroke-linecap="round" stroke-linejoin="round"><path d="M11 2.8 A8.4 8.4 0 1 1 6.2 18 L2.8 19.2 L3.8 15.6 A8.4 8.4 0 0 1 11 2.8Z"/><path d="M7.4 12.2 Q11 15.2 14.6 12.2"/></g></svg>
<span style="left:1029.8px;top:1496.7px;font-size:22.8px;line-height:30px;color:#ececec;letter-spacing:-0.80px;">Ask</span>
<span style="left:1073px;top:1496.7px;font-size:22.8px;line-height:30px;color:#9b9b9b;letter-spacing:0.38px;">Alt+L</span>
<svg style="left:1138.9px;top:1506.3px;" width="17" height="10.6" viewBox="0 0 17 10.6"><path d="M2 2 L8.5 8.6 L15 2" fill="none" stroke="#8c8c8c" stroke-width="1.7" stroke-linecap="round" stroke-linejoin="round"/></svg>
<span style="left:1187.6px;top:1496.5px;font-size:22.8px;line-height:30px;color:#ececec;letter-spacing:-0.41px;">deepseek-</span>
<span style="left:1290.3px;top:1496.5px;font-size:22.8px;line-height:30px;color:#ececec;letter-spacing:-0.41px;">v3</span>
<svg style="left:1320.0px;top:1505.3000000000002px;" width="16" height="10.2" viewBox="0 0 16 10.2"><path d="M2 2 L8.0 8.2 L14 2" fill="none" stroke="#8c8c8c" stroke-width="1.7" stroke-linecap="round" stroke-linejoin="round"/></svg>
<div style="left:1899.8px;top:1490.8px;width:38.6px;height:41px;background:#0e639c;border-radius:50%;"></div>
<svg style="left:1905px;top:1500px;" width="28" height="28" viewBox="1905 1500 28 28"><path d="M1908.8 1509.7 L1927.8 1503.6 L1921.6 1523.3 L1916.9 1516.6 L1922 1510.2 L1915.4 1514.3Z" fill="#ffffff" stroke="#ffffff" stroke-width="0.8" stroke-linejoin="round"/></svg>
<div style="left:2000.4px;top:72px;width:1.6px;height:1521px;background:#1e1f22;"></div>
<div style="left:2002px;top:72px;width:67px;height:1521px;background:#2b2d30;"></div>
<svg style="left:2019px;top:88px;" width="38" height="38" viewBox="0 0 38 38"><g fill="none" stroke="#ced0d6" stroke-width="2.45" stroke-linecap="round" stroke-linejoin="round"><path d="M21.6 4.4 Q19.6 3.6 17.6 3.6 Q9.4 3.6 9.4 12.6 Q9.4 19.6 4.6 24.6 Q3.8 26.4 5.6 26.6 H30 Q31.8 26.4 31 24.6 Q27.4 20.6 26.6 15.6"/></g><path d="M13.8 29.6 H22 Q20.8 32.6 17.9 32.6 Q15 32.6 13.8 29.6Z" fill="#ced0d6"/><circle cx="29.4" cy="7.6" r="6.6" fill="#db5c5c"/></svg>
<svg style="left:2020px;top:160px;" width="36" height="36" viewBox="0 0 36 36"><g fill="none" stroke="#ced0d6" stroke-width="2.5" stroke-linecap="round"><path d="M27.4 29.2 Q22 30.6 16.4 29.6 Q5 27 4.6 17.8 Q5 8.6 14.8 5.4 Q24.6 3 30.6 9.4 Q34.6 15.6 29 21 Q23.4 25.4 16.6 23.4 Q10.6 20.8 12 15.4 Q14.2 10.4 20.4 11.4 Q25.6 13.4 23 17.6 Q20.4 19.8 18 17.4"/></g></svg>
<div style="left:2011px;top:220.6px;width:52.6px;height:52.6px;background:#3574f0;border-radius:9px;"></div>
<svg style="left:2019px;top:227px;" width="38" height="40" viewBox="0 0 38 40"><path d="M18.4 1.8 L33.6 10.2 Q34.6 10.8 34.6 12 V27.6 Q34.6 28.8 33.6 29.4 L18.4 38 L3.2 29.4 Q2.2 28.8 2.2 27.6 V12 Q2.2 10.8 3.2 10.2Z" fill="#ffffff"/><path d="M12.2 8.6 L25.6 16.4 L19 20.6 L24 31.4 L10.2 21.6 L17.4 17.4Z" fill="#3574f0"/></svg>
<div style="left:0px;top:0px;width:2069px;height:70px;background:linear-gradient(90deg,#2e2e2e 0px,#403c30 120px,#4a4433 260px,#433e32 400px,#35342f 560px,#2d2e30 700px,#2b2d30 760px);"></div>
<div style="left:0px;top:70px;width:2069px;height:2px;background:#1e1f22;"></div>
<svg style="left:21px;top:21px;" width="28" height="28" viewBox="0 0 28 28"><defs><linearGradient id="ij" x1="0" y1="1" x2="1" y2="0"><stop offset="0" stop-color="#087cfa"/><stop offset="0.35" stop-color="#2f6bf0"/><stop offset="0.6" stop-color="#9a45c8"/><stop offset="0.85" stop-color="#f42b6a"/><stop offset="1" stop-color="#fe2857"/></linearGradient></defs>
<path d="M8.5 0 H26.5 Q28 0 28 1.5 V17.5 L18 28 H1.5 Q0 28 0 26.5 V9 Z" fill="url(#ij)"/>
<rect x="5" y="5" width="17.6" height="17.6" fill="#000"/>
<path d="M7.2 7.6h3.6v1.1h-1.2v3.9h1.2v1.1h-3.6v-1.1h1.2v-3.9h-1.2z M12 7.6h3.4v4.3q0 1.9-2 1.9h-1.1v-1.1h0.9q1 0 1-1v-3h-2.2z" fill="#fff"/>
<rect x="7.2" y="19" width="6.6" height="1.4" fill="#fff"/></svg>
<div style="left:89px;top:21.9px;width:28px;height:2.5px;background:#c9cbd1;border-radius:1.2px;"></div>
<div style="left:89px;top:29.7px;width:28px;height:2.5px;background:#c9cbd1;border-radius:1.2px;"></div>
<div style="left:89px;top:37.5px;width:28px;height:2.5px;background:#c9cbd1;border-radius:1.2px;"></div>
<div style="left:89px;top:45.5px;width:28px;height:2.5px;background:#c9cbd1;border-radius:1.2px;"></div>
<div style="left:154px;top:17px;width:35px;height:35px;background:linear-gradient(160deg,#b8941c,#bf8618);border-radius:7px;"></div>
<span style="left:157.8px;top:21.7px;font-size:23.2px;line-height:30px;color:#fff;font-family:'Liberation Mono', monospace;letter-spacing:-0.32px;">MM</span>
<span style="left:201.0px;top:21.1px;font-size:22.8px;line-height:30px;color:#dfe1e5;letter-spacing:0.27px;">mall-</span>
<span style="left:251.7px;top:21.1px;font-size:22.8px;line-height:30px;color:#dfe1e5;letter-spacing:0.27px;">master</span>
<svg style="left:333.0px;top:29.700000000000003px;" width="17" height="11" viewBox="0 0 17 11"><path d="M2 2 L8.5 9 L15 2" fill="none" stroke="#9da0a8" stroke-width="2" stroke-linecap="round" stroke-linejoin="round"/></svg>
<svg style="left:384px;top:21px;" width="27" height="26" viewBox="0 0 27 26"><path d="M13.5 2.2 Q15 2.2 15.8 3.6 L25 20 Q26.2 23.6 22.6 24 H4.4 Q0.8 23.6 2 20 L11.2 3.6 Q12 2.2 13.5 2.2Z" fill="#f2c55c"/><rect x="11.9" y="7.8" width="3.2" height="9" rx="1.6" fill="#5a4a24"/><circle cx="13.5" cy="20" r="1.9" fill="#5a4a24"/></svg>
<span style="left:424.5px;top:21.1px;font-size:22.8px;line-height:30px;color:#dfe1e5;letter-spacing:0.29px;">&lt;unknown&gt;</span>
<svg style="left:556.5px;top:29.700000000000003px;" width="17" height="11" viewBox="0 0 17 11"><path d="M2 2 L8.5 9 L15 2" fill="none" stroke="#9da0a8" stroke-width="2" stroke-linecap="round" stroke-linejoin="round"/></svg>
<span style="left:1180.5px;top:20.9px;font-size:22.8px;line-height:30px;color:#dfe1e5;letter-spacing:-0.17px;">Current </span>
<span style="left:1261.5px;top:20.9px;font-size:22.8px;line-height:30px;color:#dfe1e5;letter-spacing:-0.17px;">File</span>
<svg style="left:1304.3px;top:30.75px;" width="20" height="12.5" viewBox="0 0 20 12.5"><path d="M2 2 L10.0 10.5 L18 2" fill="none" stroke="#9da0a8" stroke-width="2" stroke-linecap="round" stroke-linejoin="round"/></svg>
<svg style="left:1360px;top:21px;" width="28" height="30" viewBox="0 0 28 30"><path d="M3.5 4.5 V25 Q3.5 26.4 4.8 25.7 L22.6 15.9 Q23.8 15 22.6 14.2 L4.8 3.8 Q3.5 3.1 3.5 4.5Z" fill="none" stroke="#6f737a" stroke-width="2.2" stroke-linejoin="round"/></svg>
<svg style="left:1416px;top:21px;" width="30" height="28" viewBox="0 0 30 28"><g fill="none" stroke="#6f737a" stroke-width="2.1" stroke-linecap="round">
<path d="M10.5 8.5 Q10.5 3 15 3 Q19.5 3 19.5 8.5"/>
<path d="M8 11.5 Q8 8.6 11 8.6 H19 Q22 8.6 22 11.5 V17.5 Q22 24.8 15 24.8 Q8 24.8 8 17.5Z"/>
<path d="M8 16.3H2.6M22 16.3H27.4M8.2 11.4 L4 8.4M21.8 11.4 L26 8.4M8.8 21.2 L4.4 24.6M21.2 21.2 L25.6 24.6"/></g></svg>
<div style="left:1488.7px;top:23.5px;width:4.6px;height:4.6px;background:#ced0d6;border-radius:50%;"></div>
<div style="left:1488.7px;top:33.0px;width:4.6px;height:4.6px;background:#ced0d6;border-radius:50%;"></div>
<div style="left:1488.7px;top:42.400000000000006px;width:4.6px;height:4.6px;background:#ced0d6;border-radius:50%;"></div>
<svg style="left:1628px;top:18px;" width="36" height="36" viewBox="0 0 36 36"><g fill="none" stroke="#ced0d6" stroke-width="2.2" stroke-linecap="round" stroke-linejoin="round">
<circle cx="15.2" cy="9" r="5.6"/><path d="M17.5 30 H5.2 Q3.4 30 3.6 28.2 Q4.8 19.6 15.2 19.6 Q19 19.6 21.4 20.8"/><path d="M25.6 21.6 V33.4M19.7 27.5 H31.5"/></g></svg>
<svg style="left:1697px;top:19px;" width="34" height="34" viewBox="0 0 34 34"><g fill="none" stroke="#ced0d6" stroke-width="2.3" stroke-linecap="round"><circle cx="14.3" cy="14.6" r="11.2"/><path d="M22.6 22.9 L30.6 30.6"/></g></svg>
<svg style="left:1764.7px;top:17.0px" width="36.6" height="36.6" viewBox="1764.7 17.0 36.6 36.6"><path d="M1783.00 20.00 L1784.00 20.03 L1785.00 20.13 L1785.89 20.75 L1786.51 22.18 L1786.96 23.63 L1787.54 24.35 L1788.24 24.67 L1788.93 25.03 L1789.59 25.44 L1790.22 25.89 L1791.13 26.03 L1792.60 25.70 L1794.15 25.52 L1795.14 25.99 L1795.72 26.80 L1796.25 27.65 L1796.72 28.53 L1797.14 29.44 L1797.04 30.53 L1796.12 31.79 L1795.09 32.90 L1794.76 33.75 L1794.83 34.52 L1794.86 35.30 L1794.83 36.08 L1794.76 36.85 L1795.09 37.70 L1796.12 38.81 L1797.04 40.07 L1797.14 41.16 L1796.72 42.07 L1796.25 42.95 L1795.72 43.80 L1795.14 44.61 L1794.15 45.08 L1792.60 44.90 L1791.13 44.57 L1790.22 44.71 L1789.59 45.16 L1788.93 45.57 L1788.24 45.93 L1787.54 46.25 L1786.96 46.97 L1786.51 48.42 L1785.89 49.85 L1785.00 50.47 L1784.00 50.57 L1783.00 50.60 L1782.00 50.57 L1781.00 50.47 L1780.11 49.85 L1779.49 48.42 L1779.04 46.97 L1778.46 46.25 L1777.76 45.93 L1777.07 45.57 L1776.41 45.16 L1775.78 44.71 L1774.87 44.57 L1773.40 44.90 L1771.85 45.08 L1770.86 44.61 L1770.28 43.80 L1769.75 42.95 L1769.28 42.07 L1768.86 41.16 L1768.96 40.07 L1769.88 38.81 L1770.91 37.70 L1771.24 36.85 L1771.17 36.08 L1771.14 35.30 L1771.17 34.52 L1771.24 33.75 L1770.91 32.90 L1769.88 31.79 L1768.96 30.53 L1768.86 29.44 L1769.28 28.53 L1769.75 27.65 L1770.28 26.80 L1770.86 25.99 L1771.85 25.52 L1773.40 25.70 L1774.87 26.03 L1775.78 25.89 L1776.41 25.44 L1777.07 25.03 L1777.76 24.67 L1778.46 24.35 L1779.04 23.63 L1779.49 22.18 L1780.11 20.75 L1781.00 20.13 L1782.00 20.03Z" fill="none" stroke="#ced0d6" stroke-width="2.2" stroke-linejoin="round"/><circle cx="1783" cy="35.3" r="5.05" fill="none" stroke="#ced0d6" stroke-width="2.2"/></svg>
<div style="left:1788.5px;top:17.6px;width:12px;height:12px;background:#f2c55c;border-radius:50%;box-shadow:0 0 0 1.5px #2b2d30;"></div>
<div style="left:1856px;top:33.4px;width:15.2px;height:1.3px;background:#dfe1e5;"></div>
<div style="left:1938px;top:27.2px;width:14.8px;height:14.8px;background:transparent;border:1.6px solid #dfe1e5;border-radius:2.5px;box-sizing:border-box;"></div>
<svg style="left:2018px;top:25px;" width="20" height="20" viewBox="0 0 20 20"><path d="M2.5 2.5 L17.3 17.3 M17.3 2.5 L2.5 17.3" stroke="#dfe1e5" stroke-width="1.7" stroke-linecap="round"/></svg>
<div style="left:0px;top:1592.6px;width:2069px;height:1.8px;background:#1e1f22;"></div>
<div style="left:0px;top:1594.4px;width:2069px;height:48.6px;background:#2b2d30;"></div>
<div style="left:182px;top:1594.4px;width:1341.6px;height:4.6px;background:#4c4d51;"></div>
<span style="left:29.0px;top:1603.3px;font-size:22.8px;line-height:30px;color:#a9aeb6;letter-spacing:0.31px;">mall-</span>
<span style="left:80.0px;top:1603.3px;font-size:22.8px;line-height:30px;color:#a9aeb6;letter-spacing:0.31px;">master</span>
<svg style="left:167.9px;top:1609.3999999999999px;" width="10.4" height="16.4" viewBox="0 0 10.4 16.4"><path d="M2 2 L8.4 8.2 L2 14.4" fill="none" stroke="#9da0a8" stroke-width="1.8" stroke-linecap="round" stroke-linejoin="round"/></svg>
<span style="left:194.6px;top:1603.3px;font-size:22.8px;line-height:30px;color:#a9aeb6;letter-spacing:0.02px;">mall-</span>
<span style="left:244.1px;top:1603.3px;font-size:22.8px;line-height:30px;color:#a9aeb6;letter-spacing:0.02px;">search</span>
<svg style="left:329.00000000000006px;top:1609.3999999999999px;" width="10.4" height="16.4" viewBox="0 0 10.4 16.4"><path d="M2 2 L8.4 8.2 L2 14.4" fill="none" stroke="#9da0a8" stroke-width="1.8" stroke-linecap="round" stroke-linejoin="round"/></svg>
<span style="left:355px;top:1603.3px;font-size:22.8px;line-height:30px;color:#a9aeb6;letter-spacing:-0.30px;">src</span>
<svg style="left:400.90000000000003px;top:1609.3999999999999px;" width="10.4" height="16.4" viewBox="0 0 10.4 16.4"><path d="M2 2 L8.4 8.2 L2 14.4" fill="none" stroke="#9da0a8" stroke-width="1.8" stroke-linecap="round" stroke-linejoin="round"/></svg>
<span style="left:427.4px;top:1603.3px;font-size:22.8px;line-height:30px;color:#a9aeb6;letter-spacing:0.15px;">main</span>
<svg style="left:493.8px;top:1609.3999999999999px;" width="10.4" height="16.4" viewBox="0 0 10.4 16.4"><path d="M2 2 L8.4 8.2 L2 14.4" fill="none" stroke="#9da0a8" stroke-width="1.8" stroke-linecap="round" stroke-linejoin="round"/></svg>
<span style="left:520.6px;top:1603.3px;font-size:22.8px;line-height:30px;color:#a9aeb6;letter-spacing:-0.08px;">java</span>
<svg style="left:578.5px;top:1609.3999999999999px;" width="10.4" height="16.4" viewBox="0 0 10.4 16.4"><path d="M2 2 L8.4 8.2 L2 14.4" fill="none" stroke="#9da0a8" stroke-width="1.8" stroke-linecap="round" stroke-linejoin="round"/></svg>
<span style="left:606px;top:1603.3px;font-size:22.8px;line-height:30px;color:#a9aeb6;letter-spacing:0.14px;">com</span>
<svg style="left:665.9px;top:1609.3999999999999px;" width="10.4" height="16.4" viewBox="0 0 10.4 16.4"><path d="M2 2 L8.4 8.2 L2 14.4" fill="none" stroke="#9da0a8" stroke-width="1.8" stroke-linecap="round" stroke-linejoin="round"/></svg>
<span style="left:693px;top:1603.3px;font-size:22.8px;line-height:30px;color:#a9aeb6;letter-spacing:0.03px;">macro</span>
<svg style="left:772.9px;top:1609.3999999999999px;" width="10.4" height="16.4" viewBox="0 0 10.4 16.4"><path d="M2 2 L8.4 8.2 L2 14.4" fill="none" stroke="#9da0a8" stroke-width="1.8" stroke-linecap="round" stroke-linejoin="round"/></svg>
<span style="left:800px;top:1603.3px;font-size:22.8px;line-height:30px;color:#a9aeb6;letter-spacing:0.42px;">mall</span>
<svg style="left:859.9px;top:1609.3999999999999px;" width="10.4" height="16.4" viewBox="0 0 10.4 16.4"><path d="M2 2 L8.4 8.2 L2 14.4" fill="none" stroke="#9da0a8" stroke-width="1.8" stroke-linecap="round" stroke-linejoin="round"/></svg>
<span style="left:887px;top:1603.3px;font-size:22.8px;line-height:30px;color:#a9aeb6;letter-spacing:-0.49px;">search</span>
<svg style="left:968.9px;top:1609.3999999999999px;" width="10.4" height="16.4" viewBox="0 0 10.4 16.4"><path d="M2 2 L8.4 8.2 L2 14.4" fill="none" stroke="#9da0a8" stroke-width="1.8" stroke-linecap="round" stroke-linejoin="round"/></svg>
<span style="left:996px;top:1603.3px;font-size:22.8px;line-height:30px;color:#a9aeb6;letter-spacing:0.47px;">controller</span>
<svg style="left:1110.8999999999999px;top:1609.3999999999999px;" width="10.4" height="16.4" viewBox="0 0 10.4 16.4"><path d="M2 2 L8.4 8.2 L2 14.4" fill="none" stroke="#9da0a8" stroke-width="1.8" stroke-linecap="round" stroke-linejoin="round"/></svg>
<svg style="left:1137.5px;top:1605.5px;" width="26" height="26" viewBox="0 0 26 26"><circle cx="12.8" cy="12.8" r="10.8" fill="none" stroke="#548af7" stroke-width="1.9"/><path d="M17.4 9.6 Q15.8 7.4 13 7.4 Q8.2 7.4 8.2 12.8 Q8.2 18.2 13 18.2 Q15.8 18.2 17.4 16" fill="none" stroke="#548af7" stroke-width="1.9" stroke-linecap="round"/></svg>
<span style="left:1171.0px;top:1603.3px;font-size:22.8px;line-height:30px;color:#a9aeb6;letter-spacing:-0.08px;">EsProductController</span>
<svg style="left:1390.2px;top:1609.3999999999999px;" width="10.4" height="16.4" viewBox="0 0 10.4 16.4"><path d="M2 2 L8.4 8.2 L2 14.4" fill="none" stroke="#9da0a8" stroke-width="1.8" stroke-linecap="round" stroke-linejoin="round"/></svg>
<svg style="left:1416.5px;top:1604.5px;" width="28" height="28" viewBox="0 0 28 28"><circle cx="13.6" cy="13.6" r="11.2" fill="none" stroke="#db5c5c" stroke-width="1.9"/><path d="M8 19 V11.4 M8 13.4 Q8.4 11 10.8 11 Q13.4 11 13.4 13.8 V19 M13.4 13.6 Q13.8 11 16.4 11 Q19 11 19 13.8 V19" fill="none" stroke="#db5c5c" stroke-width="1.8" stroke-linecap="round"/></svg>
<span style="left:1451px;top:1603.3px;font-size:22.8px;line-height:30px;color:#a9aeb6;letter-spacing:-0.49px;">search</span>
<svg style="left:1617px;top:1604px;" width="28" height="28" viewBox="0 0 28 28"><path d="M14 1.6 L24.6 7.8 V20.2 L14 26.4 L3.4 20.2 V7.8Z" fill="#d5d7db"/><path d="M9.6 6.8 L18.8 12.2 L14.4 15 L17.8 22.2 L8.4 15.6 L13.2 12.8Z" fill="#2b2d30"/></svg>
<span style="left:1672.6px;top:1603.3px;font-size:22.8px;line-height:30px;color:#a9aeb6;letter-spacing:-0.71px;">97:22</span>
<span style="left:1755px;top:1603.3px;font-size:22.8px;line-height:30px;color:#a9aeb6;letter-spacing:-2.30px;">LF</span>
<span style="left:1804.6px;top:1603.3px;font-size:22.8px;line-height:30px;color:#a9aeb6;letter-spacing:-0.92px;">UTF-8</span>
<span style="left:1899px;top:1603.3px;font-size:22.8px;line-height:30px;color:#a9aeb6;letter-spacing:-0.66px;">4 spaces</span>
<svg style="left:2015px;top:1603px;" width="30" height="30" viewBox="0 0 30 30"><g fill="none" stroke="#ced0d6" stroke-width="2" stroke-linejoin="round"><rect x="3.6" y="12.4" width="16.8" height="13.6" rx="2.4"/><path d="M15.4 12.2 V8.6 Q15.4 3.8 20.4 3.8 Q25.4 3.8 25.4 8.6 V10.4" stroke-linecap="round"/></g><rect x="10.8" y="16.6" width="2.4" height="5.4" rx="1.2" fill="#ced0d6"/></svg>
</div>
</body></html>
